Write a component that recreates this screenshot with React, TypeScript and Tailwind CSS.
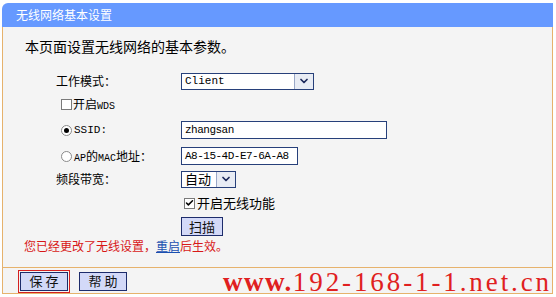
import { ChevronDown, Check } from 'lucide-react';

const cjk = { fontFamily: '"SimSun", "Noto Sans CJK SC", "Noto Sans", sans-serif' };
const mono = { fontFamily: '"Liberation Mono", "Noto Sans CJK SC", monospace' };

function FakeSelect({ value, width, arrowW = 19, cn }: { value: string; width: string; arrowW?: number; cn?: boolean }) {
    return (
        <div className={`flex h-[17px] ${width} border border-[#27407a] bg-white`}>
            <div
                className={`flex-1 flex items-center pl-[3px] text-[11px] text-black ${cn ? 'text-[13px]' : ''}`}
                style={cn ? cjk : mono}
            >
                {value}
            </div>
            <div
                className="flex items-center justify-center border-l border-[#9aa8c8] bg-[#e8ecf4]"
                style={{ width: arrowW }}
            >
                <ChevronDown className="w-[12px] h-[12px] text-[#1c2a5c]" strokeWidth={3.5} />
            </div>
        </div>
    );
}

function TextBox({ value, width }: { value: string; width: string }) {
    return (
        <div className={`flex items-center h-[18px] ${width} border border-[#27407a] bg-white pl-[3px]`}>
            <span className="text-[11px] tracking-[-0.5px] text-black" style={mono}>{value}</span>
        </div>
    );
}

function Radio({ on }: { on?: boolean }) {
    return (
        <div className="w-[11px] h-[11px] rounded-full border border-[#8a8a8a] bg-white flex items-center justify-center">
            {on && <div className="w-[5px] h-[5px] rounded-full bg-black" />}
        </div>
    );
}

function Box({ on }: { on?: boolean }) {
    return (
        <div className="w-[11px] h-[11px] border border-[#7a7a7a] bg-white flex items-center justify-center">
            {on && <Check className="w-[10px] h-[10px] text-black" strokeWidth={4} />}
        </div>
    );
}

function Btn({ children, w }: { children: React.ReactNode; w: string }) {
    return (
        <div className={`flex items-center justify-center h-[19px] ${w} border border-[#1d2c6b] bg-[#d3d9f8] text-[13px] text-[#111]`} style={cjk}>
            {children}
        </div>
    );
}

export default function App() {
    return (
        <div className="w-[556px] h-[297px] bg-white pt-[3px] pl-[2px] overflow-hidden" style={cjk}>
            <div className="w-[551px]">
                {/* header */}
                <div className="h-[24px] bg-[#6699ff] rounded-tl-[6px] flex items-center pl-[14px] text-[12px] text-white">
                    无线网络基本设置
                </div>

                <div className="border-x border-[#e6b26c] bg-[#f4f4f4] h-[240px] flex flex-col text-[12px] text-black">
                    <div className="h-[20px] mt-[9px] flex items-center pl-[22px] text-[14px]">本页面设置无线网络的基本参数。</div>

                    <div className="mt-[15px] h-[20px] flex items-center">
                        <div className="w-[178px] pl-[53px]">工作模式：</div>
                        <FakeSelect value="Client" width="w-[133px]" />
                    </div>

                    <div className="mt-[3px] h-[20px] flex items-center pl-[58px] gap-[1px]">
                        <Box />
                        <span>开启<span className="text-[10px]" style={mono}>WDS</span></span>
                    </div>

                    <div className="mt-[6px] h-[20px] flex items-center">
                        <div className="w-[178px] pl-[58px] flex items-center gap-[2px]">
                            <Radio on />
                            <span className="text-[11px]" style={mono}>SSID:</span>
                        </div>
                        <TextBox value="zhangsan" width="w-[206px]" />
                    </div>

                    <div className="mt-[6px] h-[20px] flex items-center">
                        <div className="w-[178px] pl-[58px] flex items-center gap-[2px]">
                            <Radio />
                            <span>
                                <span className="text-[10px]" style={mono}>AP</span>的<span className="text-[10px]" style={mono}>MAC</span>地址：
                            </span>
                        </div>
                        <TextBox value="A8-15-4D-E7-6A-A8" width="w-[117px]" />
                    </div>

                    <div className="mt-[3px] h-[20px] flex items-center">
                        <div className="w-[178px] pl-[53px]">频段带宽：</div>
                        <FakeSelect value="自动" width="w-[55px]" cn />
                    </div>

                    <div className="mt-[5px] h-[18px] flex items-center pl-[181px] gap-[2px]">
                        <Box on />
                        <span className="text-[13px]">开启无线功能</span>
                    </div>

                    <div className="mt-[5px] flex pl-[178px]">
                        <Btn w="w-[42px]">扫描</Btn>
                    </div>

                    <div className="h-[20px] flex items-center pl-[21px] text-[#d81818]">
                        您已经更改了无线设置，<span className="text-[#1a4fb0] underline">重启</span>后生效。
                    </div>
                </div>

                {/* bottom bar */}
                <div className="border border-[#e6b26c] bg-[#f4f4f4] h-[27px] flex items-center pl-[15px]">
                    <div className="border border-[#d42020] p-[1px] mt-[1px]">
                        <Btn w="w-[48px]">保&nbsp;存</Btn>
                    </div>
                    <div className="ml-[9px] mt-[1px]">
                        <Btn w="w-[48px]">帮&nbsp;助</Btn>
                    </div>
                    <div
                        className="ml-auto mt-[4px] whitespace-nowrap leading-none text-[#e02020] text-[27px]"
                        style={{ fontFamily: '"Liberation Serif", serif' }}
                    >
                        <span className="font-bold tracking-[1.5px]">www.</span>
                        <span className="tracking-[2.9px]">192-168-1-1.net.cn</span>
                    </div>
                </div>
            </div>
        </div>
    );
}
